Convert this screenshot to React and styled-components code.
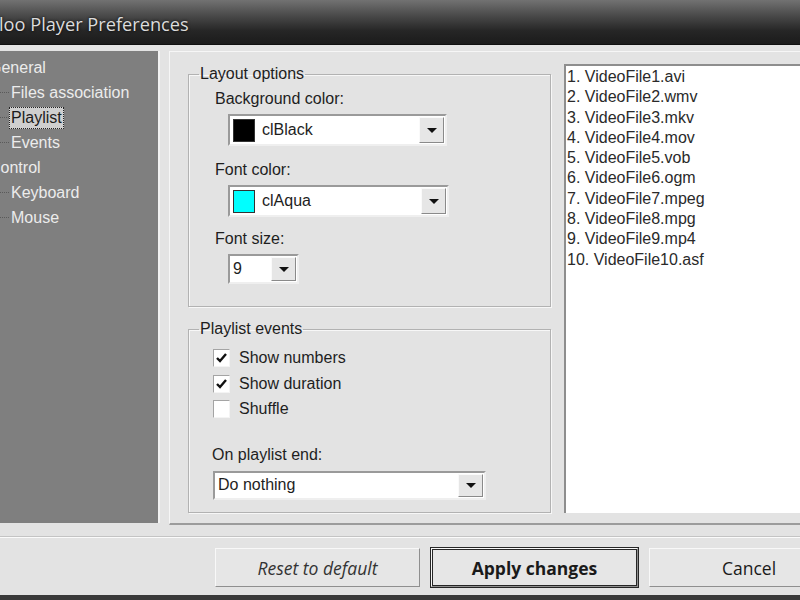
import React from 'react'
import styled, { createGlobalStyle } from 'styled-components'

const Global = createGlobalStyle`
  html, body {
    margin: 0;
    padding: 0;
    background: #e3e3e3;
  }
  * { box-sizing: border-box; }
`

const Window = styled.div`
  width: 800px;
  height: 600px;
  overflow: hidden;
  display: flex;
  flex-direction: column;
  background: #e3e3e3;
  font-family: "Liberation Sans", Arial, sans-serif;
  font-size: 16px;
  color: #1e1e1e;
`
const TitleBar = styled.div`
  height: 45px;
  flex: none;
  display: flex;
  align-items: center;
  padding-top: 3px;
  background: linear-gradient(#727272 0%, #4a4a4a 35%, #262626 70%, #1b1b1b 100%);
  border-bottom: 1px solid #101010;
`
const Title = styled.div`
  font-family: "Open Sans", "Noto Sans", sans-serif;
  font-size: 18.2px;
  color: #dcdcdc;
  text-shadow: 0 0 3px rgba(0,0,0,0.9);
  margin-left: -1px;
`
const Body = styled.div`
  flex: 1;
  display: flex;
  flex-direction: column;
  padding-top: 6px;
`
const Main = styled.div`
  height: 474px;
  flex: none;
  display: flex;
  gap: 9px;
`
const Tree = styled.div`
  width: 160px;
  height: 472px;
  background: #7f7f7f;
  border-right: 2px solid #f2f2f2;
  padding-top: 4px;
  overflow: hidden;
`
const TreeRow = styled.div`
  height: 25px;
  display: flex;
  align-items: center;
  margin-left: ${p => (p.child ? '0px' : '-13px')};
  color: #ececec;
  white-space: nowrap;
`
const Branch = styled.span`
  width: 9px;
  border-top: 1px dotted #5a5a5a;
  flex: none;
`
const TreeLabel = styled.span`
  padding: 1px 1px;
  border: 1px dotted ${p => (p.selected ? '#222' : 'transparent')};
  background: ${p => (p.selected ? '#cfcfcf' : 'transparent')};
  color: ${p => (p.selected ? '#1c1c1c' : '#ececec')};
`
const Panel = styled.div`
  flex: 1;
  display: flex;
  gap: 13px;
  padding: 13px 0 10px 18px;
  border-top: 1px solid #f6f6f6;
  border-left: 1px solid #f6f6f6;
  border-bottom: 2px solid #9c9c9c;
`
const Groups = styled.div`
  width: 363px;
  flex: none;
  display: flex;
  flex-direction: column;
  gap: 13px;
`
const Group = styled.fieldset`
  margin: 0;
  height: ${p => p.h}px;
  padding: 0 0 0 24px;
  border: 1px solid #b2b2b2;
  box-shadow: inset 1px 1px 0 #f7f7f7, 1px 1px 0 #f7f7f7;
  display: flex;
  flex-direction: column;
  align-items: flex-start;
`
const Legend = styled.legend`
  padding: 0 1px;
  margin-left: -14px;
  line-height: 18px;
  color: #1e1e1e;
`
const FieldLabel = styled.div`
  line-height: 20px;
  margin-top: ${p => p.top || 0}px;
  margin-left: ${p => p.indent ?? 2}px;
`
const Combo = styled.div`
  width: ${p => p.w}px;
  height: ${p => p.h}px;
  margin-top: ${p => p.top || 0}px;
  margin-left: ${p => p.indent ?? 15}px;
  background: #fff;
  border: 2px solid #9a9a9a;
  border-right-color: #efefef;
  border-bottom-color: #efefef;
  display: flex;
  align-items: center;
  padding-left: 3px;
  gap: 7px;
`
const Swatch = styled.span`
  width: 22px;
  height: 23px;
  flex: none;
  background: ${p => p.color};
  border: 1px solid #333;
`
const ComboText = styled.span`
  flex: 1;
  white-space: nowrap;
  color: #1e1e1e;
`
const DropButton = styled.span`
  width: 25px;
  align-self: stretch;
  margin: 1px 1px 1px 0;
  flex: none;
  background: #e6e6e6;
  border: 1px solid #fafafa;
  border-right-color: #8a8a8a;
  border-bottom-color: #8a8a8a;
  display: flex;
  align-items: center;
  justify-content: center;
  &::after {
    content: '';
    border-left: 5px solid transparent;
    border-right: 5px solid transparent;
    border-top: 5px solid #111;
  }
`
const CheckRow = styled.div`
  height: 25.5px;
  display: flex;
  align-items: center;
  gap: 9px;
  margin-top: ${p => p.top || 0}px;
`
const Box = styled.span`
  width: 17px;
  height: 18px;
  background: #fff;
  border: 1px solid #a4a4a4;
  border-right-color: #f4f4f4;
  border-bottom-color: #f4f4f4;
  display: flex;
  align-items: center;
  justify-content: center;
`
const ListBox = styled.div`
  flex: 1;
  margin-top: -1px;
  background: #fff;
  border-top: 2px solid #8e8e8e;
  border-left: 2px solid #8e8e8e;
  padding: 1px 0 0 1px;
`
const ListItem = styled.div`
  line-height: 20.3px;
  color: #2a2a2a;
  white-space: nowrap;
`
const Separator = styled.div`
  margin-top: 11px;
  height: 2px;
  border-top: 1px solid #c4c4c4;
  border-bottom: 1px solid #fbfbfb;
`
const ButtonRow = styled.div`
  display: flex;
  gap: 11px;
  padding-left: 215px;
  margin-top: 10px;
`
const Button = styled.div`
  flex: none;
  width: ${p => p.w}px;
  height: 39px;
  display: flex;
  align-items: center;
  justify-content: center;
  font-family: "Open Sans", "Noto Sans", sans-serif;
  font-size: 17.5px;
  font-style: ${p => (p.italic ? 'italic' : 'normal')};
  font-weight: ${p => (p.primary ? 700 : 400)};
  color: ${p => (p.italic ? '#333' : '#1a1a1a')};
  background: #e6e6e6;
  border: 1px solid #f8f8f8;
  border-right-color: #8f8f8f;
  border-bottom-color: #8f8f8f;
  box-shadow: ${p => (p.primary ? '0 0 0 1px #262626, inset 0 0 0 1px #262626' : 'none')};
`
const BottomBar = styled.div`
  margin-top: auto;
  height: 5px;
  background: #3a3a3a;
`

function Check() {
  return (
    <svg width="11" height="10" viewBox="0 0 11 10">
      <path d="M1 5 L4 8 L10 1" fill="none" stroke="#111" strokeWidth="2.4" />
    </svg>
  )
}

const files = [
  'VideoFile1.avi', 'VideoFile2.wmv', 'VideoFile3.mkv', 'VideoFile4.mov',
  'VideoFile5.vob', 'VideoFile6.ogm', 'VideoFile7.mpeg', 'VideoFile8.mpg',
  'VideoFile9.mp4', 'VideoFile10.asf',
]

export default function App() {
  return (
    <Window>
      <Global />
      <TitleBar>
        <Title>loo Player Preferences</Title>
      </TitleBar>
      <Body>
        <Main>
          <Tree>
            <TreeRow><TreeLabel>General</TreeLabel></TreeRow>
            <TreeRow child><Branch /><TreeLabel>Files association</TreeLabel></TreeRow>
            <TreeRow child><Branch /><TreeLabel selected>Playlist</TreeLabel></TreeRow>
            <TreeRow child><Branch /><TreeLabel>Events</TreeLabel></TreeRow>
            <TreeRow><TreeLabel>Control</TreeLabel></TreeRow>
            <TreeRow child><Branch /><TreeLabel>Keyboard</TreeLabel></TreeRow>
            <TreeRow child><Branch /><TreeLabel>Mouse</TreeLabel></TreeRow>
          </Tree>
          <Panel>
            <Groups>
              <Group h={244}>
                <Legend>Layout options</Legend>
                <FieldLabel top={6}>Background color:</FieldLabel>
                <Combo w={219} h={32} top={5}>
                  <Swatch color="#000" />
                  <ComboText>clBlack</ComboText>
                  <DropButton />
                </Combo>
                <FieldLabel top={14}>Font color:</FieldLabel>
                <Combo w={221} h={32} top={5}>
                  <Swatch color="#00ffff" />
                  <ComboText>clAqua</ComboText>
                  <DropButton />
                </Combo>
                <FieldLabel top={12}>Font size:</FieldLabel>
                <Combo w={71} h={30} top={5}>
                  <ComboText>9</ComboText>
                  <DropButton />
                </Combo>
              </Group>
              <Group h={194}>
                <Legend>Playlist events</Legend>
                <CheckRow top={7}><Box><Check /></Box>Show numbers</CheckRow>
                <CheckRow><Box><Check /></Box>Show duration</CheckRow>
                <CheckRow><Box />Shuffle</CheckRow>
                <FieldLabel top={23} indent={-1}>On playlist end:</FieldLabel>
                <Combo w={273} h={29} top={6} indent={0}>
                  <ComboText>Do nothing</ComboText>
                  <DropButton />
                </Combo>
              </Group>
            </Groups>
            <ListBox>
              {files.map((f, i) => (
                <ListItem key={f}>{i + 1}. {f}</ListItem>
              ))}
            </ListBox>
          </Panel>
        </Main>
        <Separator />
        <ButtonRow>
          <Button w={205} italic>Reset to default</Button>
          <Button w={207} primary>Apply changes</Button>
          <Button w={200}>Cancel</Button>
        </ButtonRow>
        <BottomBar />
      </Body>
    </Window>
  )
}
